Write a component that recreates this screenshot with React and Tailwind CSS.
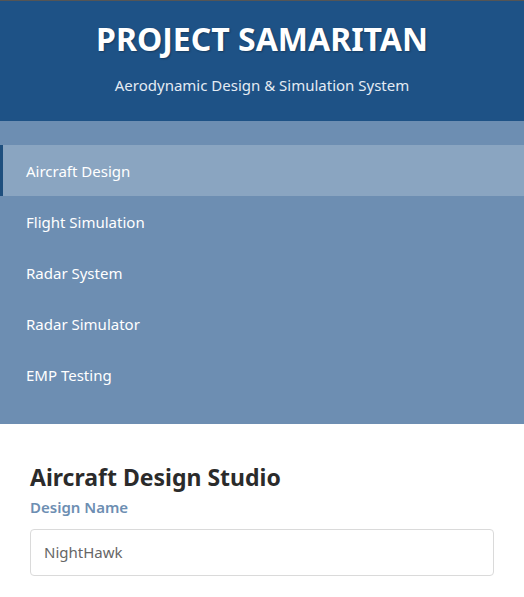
import React from "react";

const items = ["Aircraft Design", "Flight Simulation", "Radar System", "Radar Simulator", "EMP Testing"];

export default function App() {
  return (
    <div className="min-h-[597px] bg-white" style={{ fontFamily: '"Noto Sans", "Open Sans", sans-serif' }}>
      <header className="border-t border-[#555555] bg-[#1e5286] text-center text-white pt-[18px] pb-[26px]">
        <h1 className="text-[32px] font-bold leading-[40px] [text-shadow:1px_1px_2px_rgba(0,0,0,0.3)]">PROJECT SAMARITAN</h1>
        <p className="mt-[16px] text-[15px] leading-[20px] text-[#e4ebf3]">Aerodynamic Design &amp; Simulation System</p>
      </header>
      <nav className="bg-[#6d8eb2] py-[24px]">
        {items.map((it, i) =>
          i === 0 ? (
            <div key={it} className="h-[51px] flex items-center pt-[1px] pl-[23px] border-l-[3px] border-[#1e4f7e] bg-[#8aa5c1] text-[15px] text-white">
              {it}
            </div>
          ) : (
            <div key={it} className="h-[51px] flex items-center pt-[1px] pl-[26px] text-[15px] text-white">
              {it}
            </div>
          )
        )}
      </nav>
      <main className="px-[30px] pt-[38px]">
        <h2 className="text-[23px] font-bold leading-[30px] text-[#2b2b2b]">Aircraft Design Studio</h2>
        <label className="block mt-[4px] text-[15px] font-semibold leading-[22px] text-[#6d8eb2]">Design Name</label>
        <div className="mt-[11px] h-[47px] rounded-[4px] border border-[#dadada] flex items-center px-[13px] text-[15px] text-[#666666]">
          NightHawk
        </div>
      </main>
    </div>
  );
}
